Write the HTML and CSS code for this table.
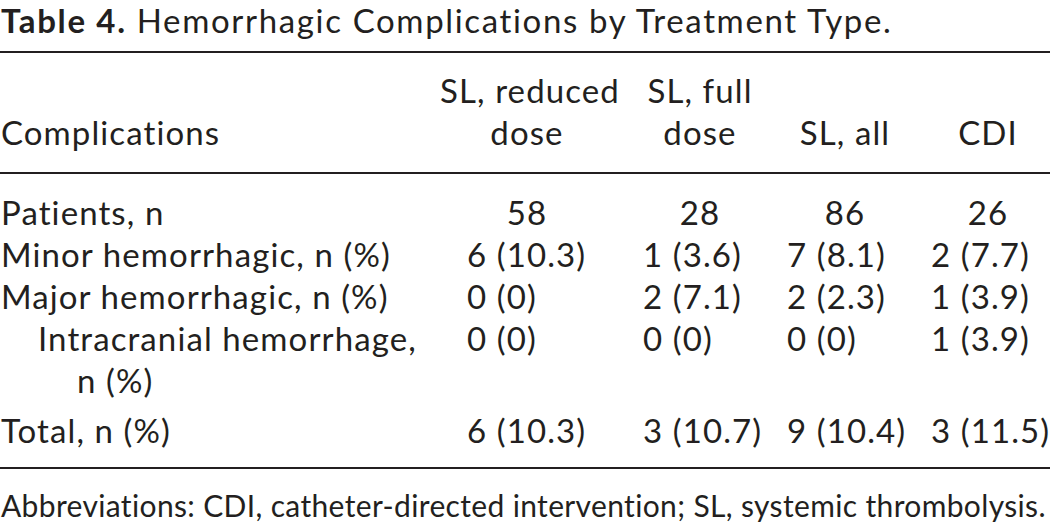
FILE: index.html
```html
<!DOCTYPE html>
<html lang="en">
<head>
<meta charset="utf-8">
<title>Table 4</title>
<link rel="stylesheet" href="styles.css">
</head>
<body>
<div class="page">
  <p class="caption"><span class="label">Table 4.</span> Hemorrhagic Complications by Treatment Type.</p>
  <table class="data">
    <colgroup>
      <col class="c-label">
      <col class="c-1">
      <col class="c-2">
      <col class="c-3">
      <col class="c-4">
    </colgroup>
    <thead>
      <tr>
        <th class="h-label">Complications</th>
        <th class="h c1">SL, reduced<br>dose</th>
        <th class="h c2">SL, full<br>dose</th>
        <th class="h c3">SL, all</th>
        <th class="h c4">CDI</th>
      </tr>
    </thead>
    <tbody>
      <tr class="first">
        <td class="lbl">Patients, n</td>
        <td class="num c1 ctr">58</td>
        <td class="num c2 ctr">28</td>
        <td class="num c3 ctr">86</td>
        <td class="num c4 ctr">26</td>
      </tr>
      <tr>
        <td class="lbl">Minor hemorrhagic, n (%)</td>
        <td class="num c1">6 (10.3)</td>
        <td class="num c2">1 (3.6)</td>
        <td class="num c3">7 (8.1)</td>
        <td class="num c4">2 (7.7)</td>
      </tr>
      <tr>
        <td class="lbl">Major hemorrhagic, n (%)</td>
        <td class="num c1">0 (0)</td>
        <td class="num c2">2 (7.1)</td>
        <td class="num c3">2 (2.3)</td>
        <td class="num c4">1 (3.9)</td>
      </tr>
      <tr>
        <td class="lbl sub">Intracranial hemorrhage,<br>n (%)</td>
        <td class="num c1">0 (0)</td>
        <td class="num c2">0 (0)</td>
        <td class="num c3">0 (0)</td>
        <td class="num c4">1 (3.9)</td>
      </tr>
      <tr class="total">
        <td class="lbl">Total, n (%)</td>
        <td class="num c1">6 (10.3)</td>
        <td class="num c2">3 (10.7)</td>
        <td class="num c3">9 (10.4)</td>
        <td class="num c4">3 (11.5)</td>
      </tr>
    </tbody>
  </table>
  <p class="note">Abbreviations: CDI, catheter-directed intervention; SL, systemic thrombolysis.</p>
</div>
</body>
</html>
```
FILE: styles.css
```css
html, body {
  margin: 0;
  padding: 0;
  background: #ffffff;
}

.page {
  width: 1050px;
  font-family: Lato, "Open Sans", "DejaVu Sans", sans-serif;
  font-size: 33px;
  letter-spacing: 1.1px;
  color: #231f20;
}

.caption {
  margin: 0 0 11px 1px;
  line-height: 40px;
  letter-spacing: 1.65px;
  white-space: nowrap;
}

.caption .label {
  font-weight: 700;
}

.data {
  width: 1050px;
  table-layout: fixed;
  border-collapse: collapse;
  border-top: 2px solid #231f20;
  border-bottom: 2px solid #231f20;
}

.c-label { width: 440px; }
.c-1 { width: 174px; }
.c-2 { width: 172px; }
.c-3 { width: 118px; }
.c-4 { width: 146px; }

.data th,
.data td {
  padding: 0;
  font-weight: 400;
  line-height: 42px;
  vertical-align: bottom;
  white-space: nowrap;
}

.data thead th {
  padding-top: 16px;
  padding-bottom: 19px;
  border-bottom: 2px solid #231f20;
}

.h-label {
  text-align: left;
  padding-left: 1px !important;
}

.h {
  text-align: center;
}

.h.c4 {
  padding-left: 22px !important;
}

.data tbody td {
  vertical-align: top;
}

.data tbody tr.first td {
  padding-top: 17px;
}

.data tbody tr.total td {
  padding-top: 8px;
  padding-bottom: 16px;
}

.lbl {
  text-align: left;
  padding-left: 1px !important;
}

.lbl.sub {
  padding-left: 77px !important;
  text-indent: -39px;
}

.num { text-align: left; }
.num.c1 { padding-left: 27px !important; }
.num.c2 { padding-left: 29px !important; }
.num.c3 { padding-left: 1px !important; }
.num.c4 { padding-left: 27px !important; }

.num.ctr.c1,
.num.ctr.c2,
.num.ctr.c3 {
  text-align: center;
  padding-left: 0 !important;
}

.num.ctr.c4 {
  text-align: center;
  padding-left: 22px !important;
}

.note {
  margin: 16px 0 0 1px;
  font-size: 30px;
  letter-spacing: 0.35px;
  line-height: 40px;
  white-space: nowrap;
}
```
